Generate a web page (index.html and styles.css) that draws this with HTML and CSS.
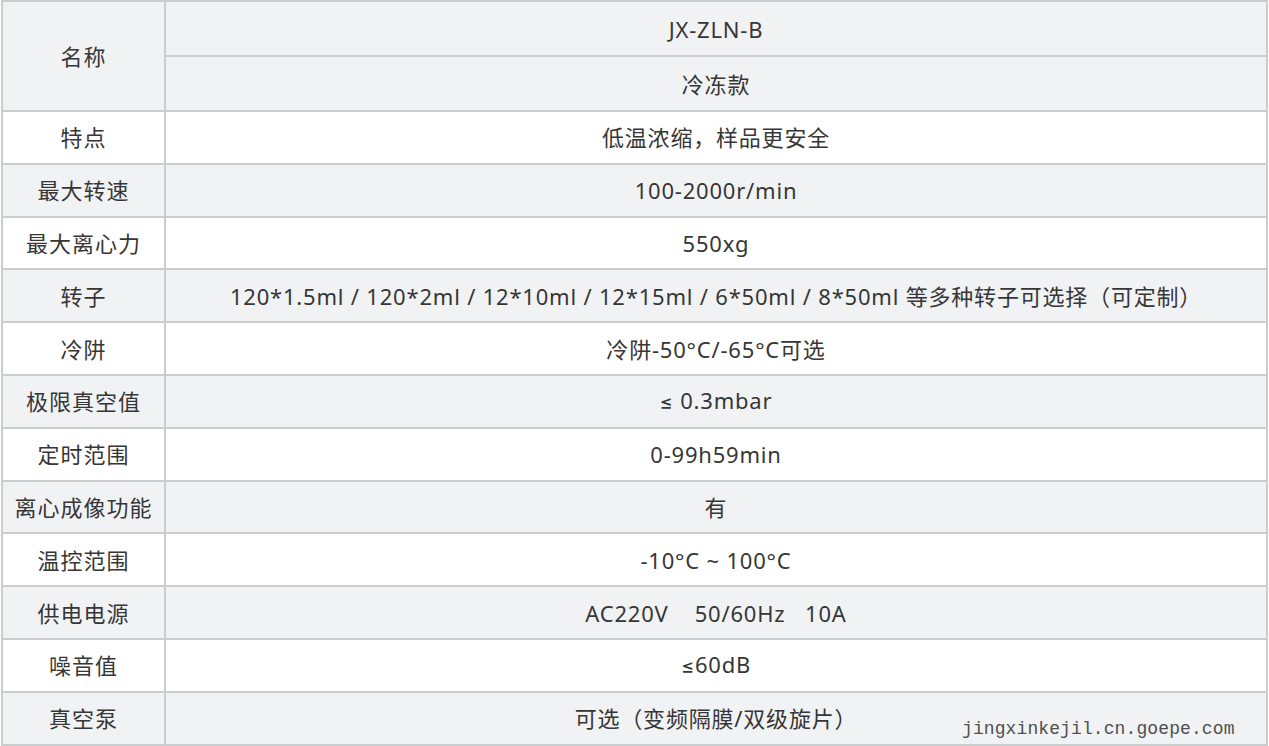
FILE: index.html
```html
<!DOCTYPE html>
<html lang="zh-CN">
<head>
<meta charset="utf-8">
<title>JX-ZLN-B 参数</title>
<link rel="stylesheet" href="styles.css">
</head>
<body>
<div class="page">
<table class="spec">
  <colgroup><col class="c-name"><col class="c-val"></colgroup>
  <tbody>
    <tr class="gray tall"><td class="k" rowspan="2">名称</td><td>JX-ZLN-B</td></tr>
    <tr class="gray tall"><td>冷冻款</td></tr>
    <tr class="white"><td class="k">特点</td><td>低温浓缩，样品更安全</td></tr>
    <tr class="gray"><td class="k">最大转速</td><td>100-2000r/min</td></tr>
    <tr class="white"><td class="k">最大离心力</td><td>550xg</td></tr>
    <tr class="gray"><td class="k">转子</td><td>120*1.5ml / 120*2ml / 12*10ml / 12*15ml / 6*50ml / 8*50ml 等多种转子可选择（可定制）</td></tr>
    <tr class="white"><td class="k">冷阱</td><td>冷阱-50°C/-65°C可选</td></tr>
    <tr class="gray"><td class="k">极限真空值</td><td><span class="sym">≤</span> 0.3mbar</td></tr>
    <tr class="white"><td class="k">定时范围</td><td>0-99h59min</td></tr>
    <tr class="gray"><td class="k">离心成像功能</td><td>有</td></tr>
    <tr class="white"><td class="k">温控范围</td><td>-10°C ~ 100°C</td></tr>
    <tr class="gray"><td class="k">供电电源</td><td>AC220V&nbsp;&nbsp;&nbsp;&nbsp;50/60Hz&nbsp;&nbsp;&nbsp;10A</td></tr>
    <tr class="white"><td class="k">噪音值</td><td><span class="sym">≤</span>60dB</td></tr>
    <tr class="gray"><td class="k">真空泵</td><td>可选（变频隔膜/双级旋片）</td></tr>
  </tbody>
</table>
<div class="watermark">jingxinkejil.cn.goepe.com</div>
</div>
</body>
</html>
```
FILE: styles.css
```css
html, body {
  margin: 0;
  padding: 0;
  background: #ffffff;
}
.page {
  position: relative;
  width: 1269px;
  height: 746px;
  overflow: hidden;
}
.spec {
  border-collapse: collapse;
  width: 1267px;
  margin: 0 0 0 1px;
  table-layout: fixed;
  font-family: "Noto Sans", "Noto Sans CJK SC", sans-serif;
  font-size: 22px;
  letter-spacing: 0.8px;
  color: #363636;
}
.c-name { width: 163px; }
.spec td {
  border: 2px solid #cccccc;
  text-align: center;
  vertical-align: middle;
  padding: 0;
  height: 50.8px;
  line-height: 26px;
}
.spec tr.tall td { height: 53px; }
.spec tr.gray td { background: #f1f2f4; }
.spec tr.white td { background: #ffffff; }
.spec td.k { letter-spacing: 1px; }
.sym { font-family: "Inter", "DejaVu Sans", sans-serif; font-size: 20px; }
.watermark {
  position: absolute;
  left: 962px;
  top: 718px;
  font-family: "Liberation Mono", "Courier New", monospace;
  font-size: 18px;
  line-height: 22px;
  letter-spacing: 0.1px;
  color: #4f4f4f;
}
```
